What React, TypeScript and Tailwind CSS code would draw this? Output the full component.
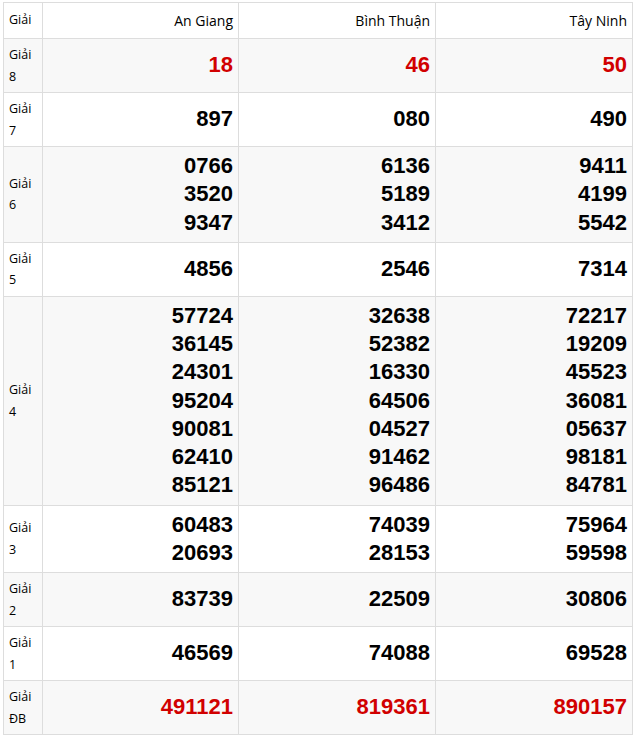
const provinces = ["An Giang", "Bình Thuận", "Tây Ninh"];

type Prize = { label: string; sub: string; red?: boolean; values: string[][] };

const prizes: Prize[] = [
  { label: "Giải", sub: "8", red: true, values: [["18"], ["46"], ["50"]] },
  { label: "Giải", sub: "7", values: [["897"], ["080"], ["490"]] },
  {
    label: "Giải",
    sub: "6",
    values: [
      ["0766", "3520", "9347"],
      ["6136", "5189", "3412"],
      ["9411", "4199", "5542"],
    ],
  },
  { label: "Giải", sub: "5", values: [["4856"], ["2546"], ["7314"]] },
  {
    label: "Giải",
    sub: "4",
    values: [
      ["57724", "36145", "24301", "95204", "90081", "62410", "85121"],
      ["32638", "52382", "16330", "64506", "04527", "91462", "96486"],
      ["72217", "19209", "45523", "36081", "05637", "98181", "84781"],
    ],
  },
  {
    label: "Giải",
    sub: "3",
    values: [
      ["60483", "20693"],
      ["74039", "28153"],
      ["75964", "59598"],
    ],
  },
  { label: "Giải", sub: "2", values: [["83739"], ["22509"], ["30806"]] },
  { label: "Giải", sub: "1", values: [["46569"], ["74088"], ["69528"]] },
  { label: "Giải", sub: "ĐB", red: true, values: [["491121"], ["819361"], ["890157"]] },
];

export default function App() {
  return (
    <div className="min-h-screen bg-white pl-[3px] pt-[2px] font-['Open_Sans',sans-serif]">
      <table className="w-[629px] table-fixed border-collapse">
        <colgroup>
          <col className="w-[39px]" />
          <col className="w-[196px]" />
          <col className="w-[197px]" />
          <col className="w-[197px]" />
        </colgroup>
        <thead>
          <tr className="h-[36px] bg-white">
            <th className="border border-[#dddddd] pl-[5px] pr-0 text-left text-[12.5px] font-normal text-black">
              Giải
            </th>
            {provinces.map((p) => (
              <th
                key={p}
                className="border border-[#dddddd] px-[5px] text-right text-[14px] font-normal text-black"
              >
                {p}
              </th>
            ))}
          </tr>
        </thead>
        <tbody>
          {prizes.map((row, i) => (
            <tr key={row.sub} className={i % 2 === 0 ? "bg-[#f8f8f8]" : "bg-white"}>
              <td className="border border-[#dddddd] pl-[5px] pr-0 py-[5px] align-middle text-[12.5px] leading-[21.5px] text-black">
                {row.label}
                <br />
                {row.sub}
              </td>
              {row.values.map((vals, j) => (
                <td
                  key={j}
                  className={`border border-[#dddddd] px-[5px] py-[5px] text-right align-middle font-['Liberation_Sans',Arial,sans-serif] text-[22px] font-bold leading-[28.25px] ${
                    row.red ? "text-[#d10000]" : "text-black"
                  }`}
                >
                  {vals.map((v) => (
                    <div key={v}>{v}</div>
                  ))}
                </td>
              ))}
            </tr>
          ))}
        </tbody>
      </table>
    </div>
  );
}
